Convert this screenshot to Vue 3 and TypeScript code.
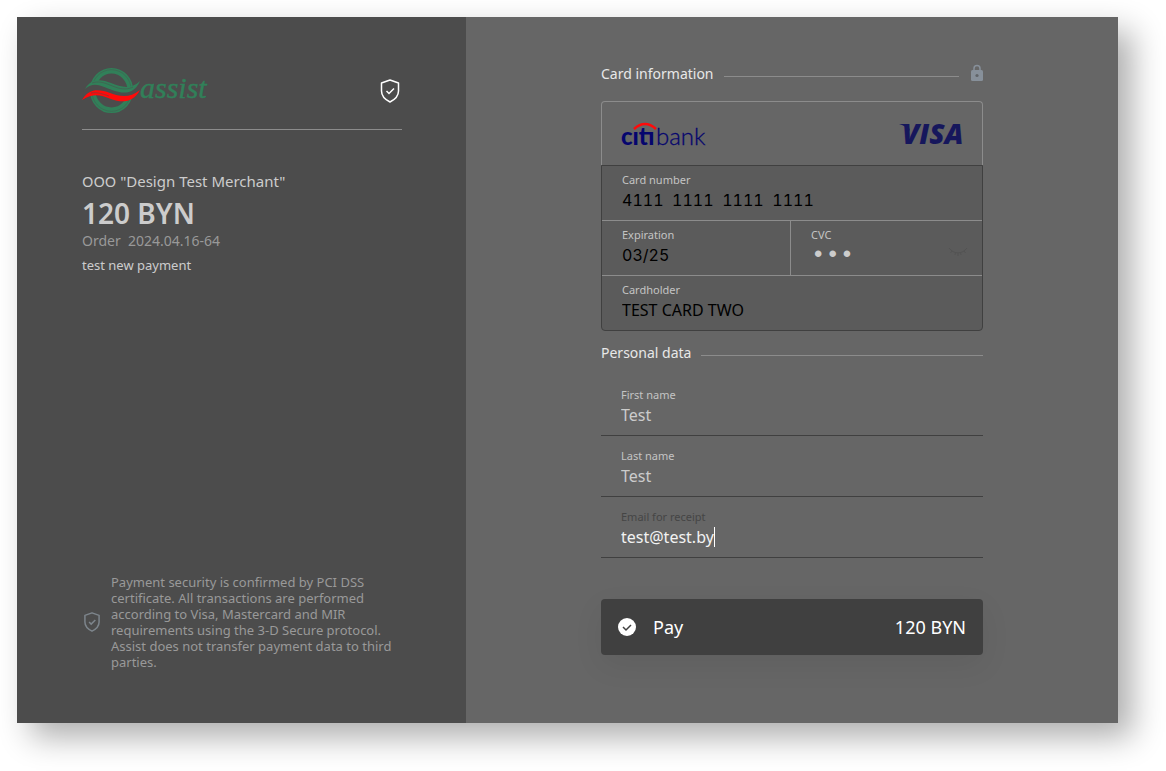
<script setup lang="ts">
import { ref } from 'vue'

interface Person { id: string; label: string; type: string; value: string }

const cardNumber = ref('4111  1111  1111  1111')
const expiration = ref('03/25')
const cvc = ref('123')
const cardholder = ref('TEST CARD TWO')
const people = ref<Person[]>([
  { id: 'first', label: 'First name', type: 'text', value: 'Test' },
  { id: 'last', label: 'Last name', type: 'text', value: 'Test' },
])
const email = ref('test@test.by')
</script>

<template>
  <div class="shell">
    <aside class="order">
      <header class="brand">
        <svg class="logo" width="128" height="48" viewBox="0 0 128 48" role="img" aria-label="assist">
          <ellipse cx="29.5" cy="23.5" rx="18.800" ry="19.800" fill="none" stroke="#318059" stroke-width="5.600" />
          <ellipse cx="29.5" cy="23.5" rx="19.800" ry="20.800" fill="none" stroke="#4c4c4c" stroke-width=".4" />
          <path d="M2 23C10 12 20 14 30 18s18 5 28-1v8C48 33 40 32 30 29S12 22 1 34Z" fill="#4c4c4c" />
          <path d="M3 22C9 11 19 12 29 16s20 7 29-2C52 28 41 27 30 23S12 14 3 22Z" fill="#318059" />
          <path d="M10 16c8-3 15 1 23 4s14 2 18 0" fill="none" stroke="#4c4c4c" stroke-width=".5" />
          <path d="M0 33C7 21 17 22 28 26s20 5 30-3C51 36 40 36 29 32S12 26 0 33Z" fill="#ff0a0a" />
          <path d="M9 26c7-1 12 1 18 3" fill="none" stroke="#4c4c4c" stroke-width=".5" />
          <text x="58" y="31" class="assist">assist</text>
        </svg>
        <svg class="shield" width="24" height="26" viewBox="0 0 24 26" aria-hidden="true">
          <path d="M12 2 20.500 5v8c0 5-3.500 8.500-8.500 11-5-2.500-8.500-6-8.500-11V5Z" fill="none" stroke="#fff" stroke-width="1.500" stroke-linejoin="round" />
          <path d="m8.500 13 2.500 2.500 5-5" fill="none" stroke="#fff" stroke-width="1.500" />
        </svg>
      </header>
      <section class="summary">
        <p class="merchant">ООО "Design Test Merchant"</p>
        <p class="amount">120 BYN</p>
        <p class="number">Order&nbsp; 2024.04.16-64</p>
        <p class="note">test new payment</p>
      </section>
      <footer class="security">
        <svg width="20" height="22" viewBox="0 0 24 26" aria-hidden="true">
          <path d="M12 2 20.500 5v8c0 5-3.500 8.500-8.500 11-5-2.500-8.500-6-8.500-11V5Z" fill="none" stroke="#7d858c" stroke-width="1.800" stroke-linejoin="round" />
          <path d="m8.500 13 2.500 2.500 5-5" fill="none" stroke="#7d858c" stroke-width="1.800" />
        </svg>
        <p>Payment security is confirmed by PCI DSS certificate. All transactions are performed according to Visa, Mastercard and MIR requirements using the 3-D Secure protocol. Assist does not transfer payment data to third parties.</p>
      </footer>
    </aside>

    <main class="payment">
      <form class="form" @submit.prevent>
        <h2 class="heading">
          <span>Card information</span>
          <i class="rule"></i>
          <svg class="lock" width="12" height="20" viewBox="0 0 12 20" aria-hidden="true">
            <path d="M3 8V4.500a3 3 0 0 1 6 0V8" fill="none" stroke="#87909a" stroke-width="1.500" />
            <rect y="6" width="12" height="11" rx="1.500" fill="#87909a" />
            <circle cx="6" cy="11.500" r="1.600" fill="#606468" />
          </svg>
        </h2>

        <div class="card">
          <div class="banks">
            <svg width="92" height="40" viewBox="-2 -6 92 40" role="img" aria-label="citibank">
              <text x="-1" y="25" class="citi">citi</text>
              <text x="34" y="25" class="bank">bank</text>
              <rect x="11" y="4" width="6" height="8" fill="#666" />
              <rect x="26" y="4" width="7" height="8" fill="#666" />
              <path d="M12 9Q23 -1 34 9" fill="none" stroke="#ff0a0a" stroke-width="2.500" />
            </svg>
            <svg width="70" height="46" viewBox="0 -11 70 46" role="img" aria-label="Visa">
              <path d="M0 2h9l2 7C8 5 4 3 0 2Z" fill="#16175c" />
              <text x="3" y="22" class="visa">VISA</text>
            </svg>
          </div>
          <div class="cells">
            <div class="cell wide">
              <label for="pan">Card number</label>
              <input id="pan" v-model="cardNumber" class="digits" type="text" inputmode="numeric">
            </div>
            <div class="cell half">
              <label for="exp">Expiration</label>
              <input id="exp" v-model="expiration" class="digits" type="text">
            </div>
            <div class="cell cvc">
              <label for="cvc">CVC</label>
              <input id="cvc" v-model="cvc" type="password">
              <button class="eye" type="button" aria-label="Show CVC">
                <svg width="20" height="10" viewBox="0 0 20 10" aria-hidden="true">
                  <path d="M1 1c5 6.500 13 6.500 18 0M4 4 2.500 6M7.500 5.500 7 8M10 6v3M12.500 5.500l.5 2.500M16 4l1.500 2" fill="none" stroke="#535353" />
                </svg>
              </button>
            </div>
            <div class="cell wide last">
              <label for="holder">Cardholder</label>
              <input id="holder" v-model="cardholder" type="text">
            </div>
          </div>
        </div>

        <h2 class="heading personal">
          <span>Personal data</span>
          <i class="rule"></i>
        </h2>

        <div v-for="p in people" :key="p.id" class="field">
          <label :for="p.id">{{ p.label }}</label>
          <input :id="p.id" v-model="p.value" :type="p.type">
        </div>
        <div class="field active">
          <label for="email">Email for receipt</label>
          <div class="typing">
            <input id="email" v-model="email" type="text" inputmode="email">
            <i class="caret"></i>
          </div>
        </div>

        <button class="pay" type="submit">
          <svg width="18" height="18" viewBox="0 0 18 18" aria-hidden="true">
            <circle cx="9" cy="9" r="9" fill="#fff" />
            <path d="m5 9 3 3 5-5" fill="none" stroke="#404040" stroke-width="1.500" />
          </svg>
          <span>Pay</span>
          <span class="total">120 BYN</span>
        </button>
      </form>
    </main>
  </div>
</template>

<style>
body { margin: 0; background: #fff; }
</style>

<style scoped>
* { box-sizing: border-box; }
p, h2 { margin: 0; font-weight: 400; }
svg { display: block; flex: none; }

.shell {
  display: grid;
  grid-template-columns: 449fr 652fr;
  min-height: calc(100vh - 65px);
  margin: 17px 48px 48px 17px;
  box-shadow: 14px 14px 30px rgba(0, 0, 0, .32);
  font-family: "Noto Sans", "Open Sans", sans-serif;
}
.order {
  display: flex;
  flex-direction: column;
  padding: 49px 64px 53px 65px;
  background: #4c4c4c;
  color: #ccc;
}
.brand {
  display: flex;
  justify-content: space-between;
  align-items: center;
  height: 64px;
  padding-bottom: 13px;
  border-bottom: 1px solid #8c8c8c;
}
.assist { font: italic 30px "Liberation Serif", serif; fill: #318059; stroke: #318059; stroke-width: .4; }

.summary { padding-top: 39px; }
.merchant { font-size: 15px; line-height: 24px; }
.amount { font-size: 28px; line-height: 36px; font-weight: 600; margin-top: 2px; }
.number { font-size: 14px; line-height: 20px; color: #999; }
.note { font-size: 13px; line-height: 20px; margin-top: 4px; }

.security {
  display: flex;
  align-items: center;
  gap: 9px;
  margin-top: auto;
  font-size: 13px;
  line-height: 16px;
  color: #999;
}

.payment {
  display: flex;
  justify-content: center;
  padding: 47px 24px 68px;
  background: #666;
}
.form { width: 100%; max-width: 382px; }
.heading {
  display: flex;
  align-items: center;
  height: 20px;
  font-size: 14px;
  line-height: 20px;
  color: #e8e8e8;
}
.rule { flex: 1; height: 1px; margin: 4px 0 0 10px; background: #8c8c8c; }
.lock { margin-left: 12px; }

.card { margin-top: 17px; }
.banks {
  display: flex;
  justify-content: space-between;
  align-items: center;
  height: 64px;
  padding: 0 13px 0 18px;
  border: 1px solid #8c8c8c;
  border-bottom: 0;
  border-radius: 4px 4px 0 0;
}
.citi { font: 900 24px Lato, sans-serif; fill: #05056e; }
.bank { font: 300 24px Lato, sans-serif; fill: #05056e; stroke: #05056e; stroke-width: .3; }
.visa { font: italic 800 28px "Open Sans", sans-serif; fill: #16175c; }

.cells {
  display: grid;
  grid-template-columns: 189fr 191fr;
  border: 1px solid #404040;
  border-radius: 0 0 4px 4px;
  background: #5b5b5b;
}
.cell {
  position: relative;
  display: flex;
  flex-direction: column;
  height: 55px;
  padding: 6px 20px 0;
  border-bottom: 1px solid #8c8c8c;
}
.wide { grid-column: 1 / -1; }
.half { border-right: 1px solid #8c8c8c; }
.last { height: 54px; border-bottom: 0; }
label { font-size: 11px; line-height: 16px; color: #c4c4c4; }
input {
  width: 100%;
  height: 24px;
  padding: 0;
  border: 0;
  outline: 0;
  background: transparent;
  color: #000;
  font: inherit;
  font-size: 16px;
}
.digits { font-family: Inter, sans-serif; font-variant-numeric: tabular-nums; }
.cvc input { color: #ccc; font-family: "Liberation Mono", monospace; font-size: 24px; }
.eye {
  position: absolute;
  right: 14px;
  top: 26px;
  padding: 0;
  border: 0;
  background: transparent;
}

.personal { margin-top: 12px; margin-bottom: 12px; }
.field {
  display: flex;
  flex-direction: column;
  height: 61px;
  padding: 12px 20px 0;
  border-bottom: 1px solid #404040;
}
.field input { color: #ccc; }
.active label { color: #454545; }
.typing { display: flex; align-items: center; }
.active input { width: auto; field-sizing: content; color: #f2f2f2; }
.caret { width: 1px; height: 20px; background: #fff; }

.pay {
  display: flex;
  align-items: center;
  width: 100%;
  height: 56px;
  margin-top: 41px;
  padding: 0 17px;
  border: 0;
  border-radius: 4px;
  background: #404040;
  color: #fff;
  font: inherit;
  font-size: 18px;
  gap: 17px;
  box-shadow: 0 10px 30px rgba(0, 0, 0, .07);
}
.total { margin-left: auto; }
</style>
